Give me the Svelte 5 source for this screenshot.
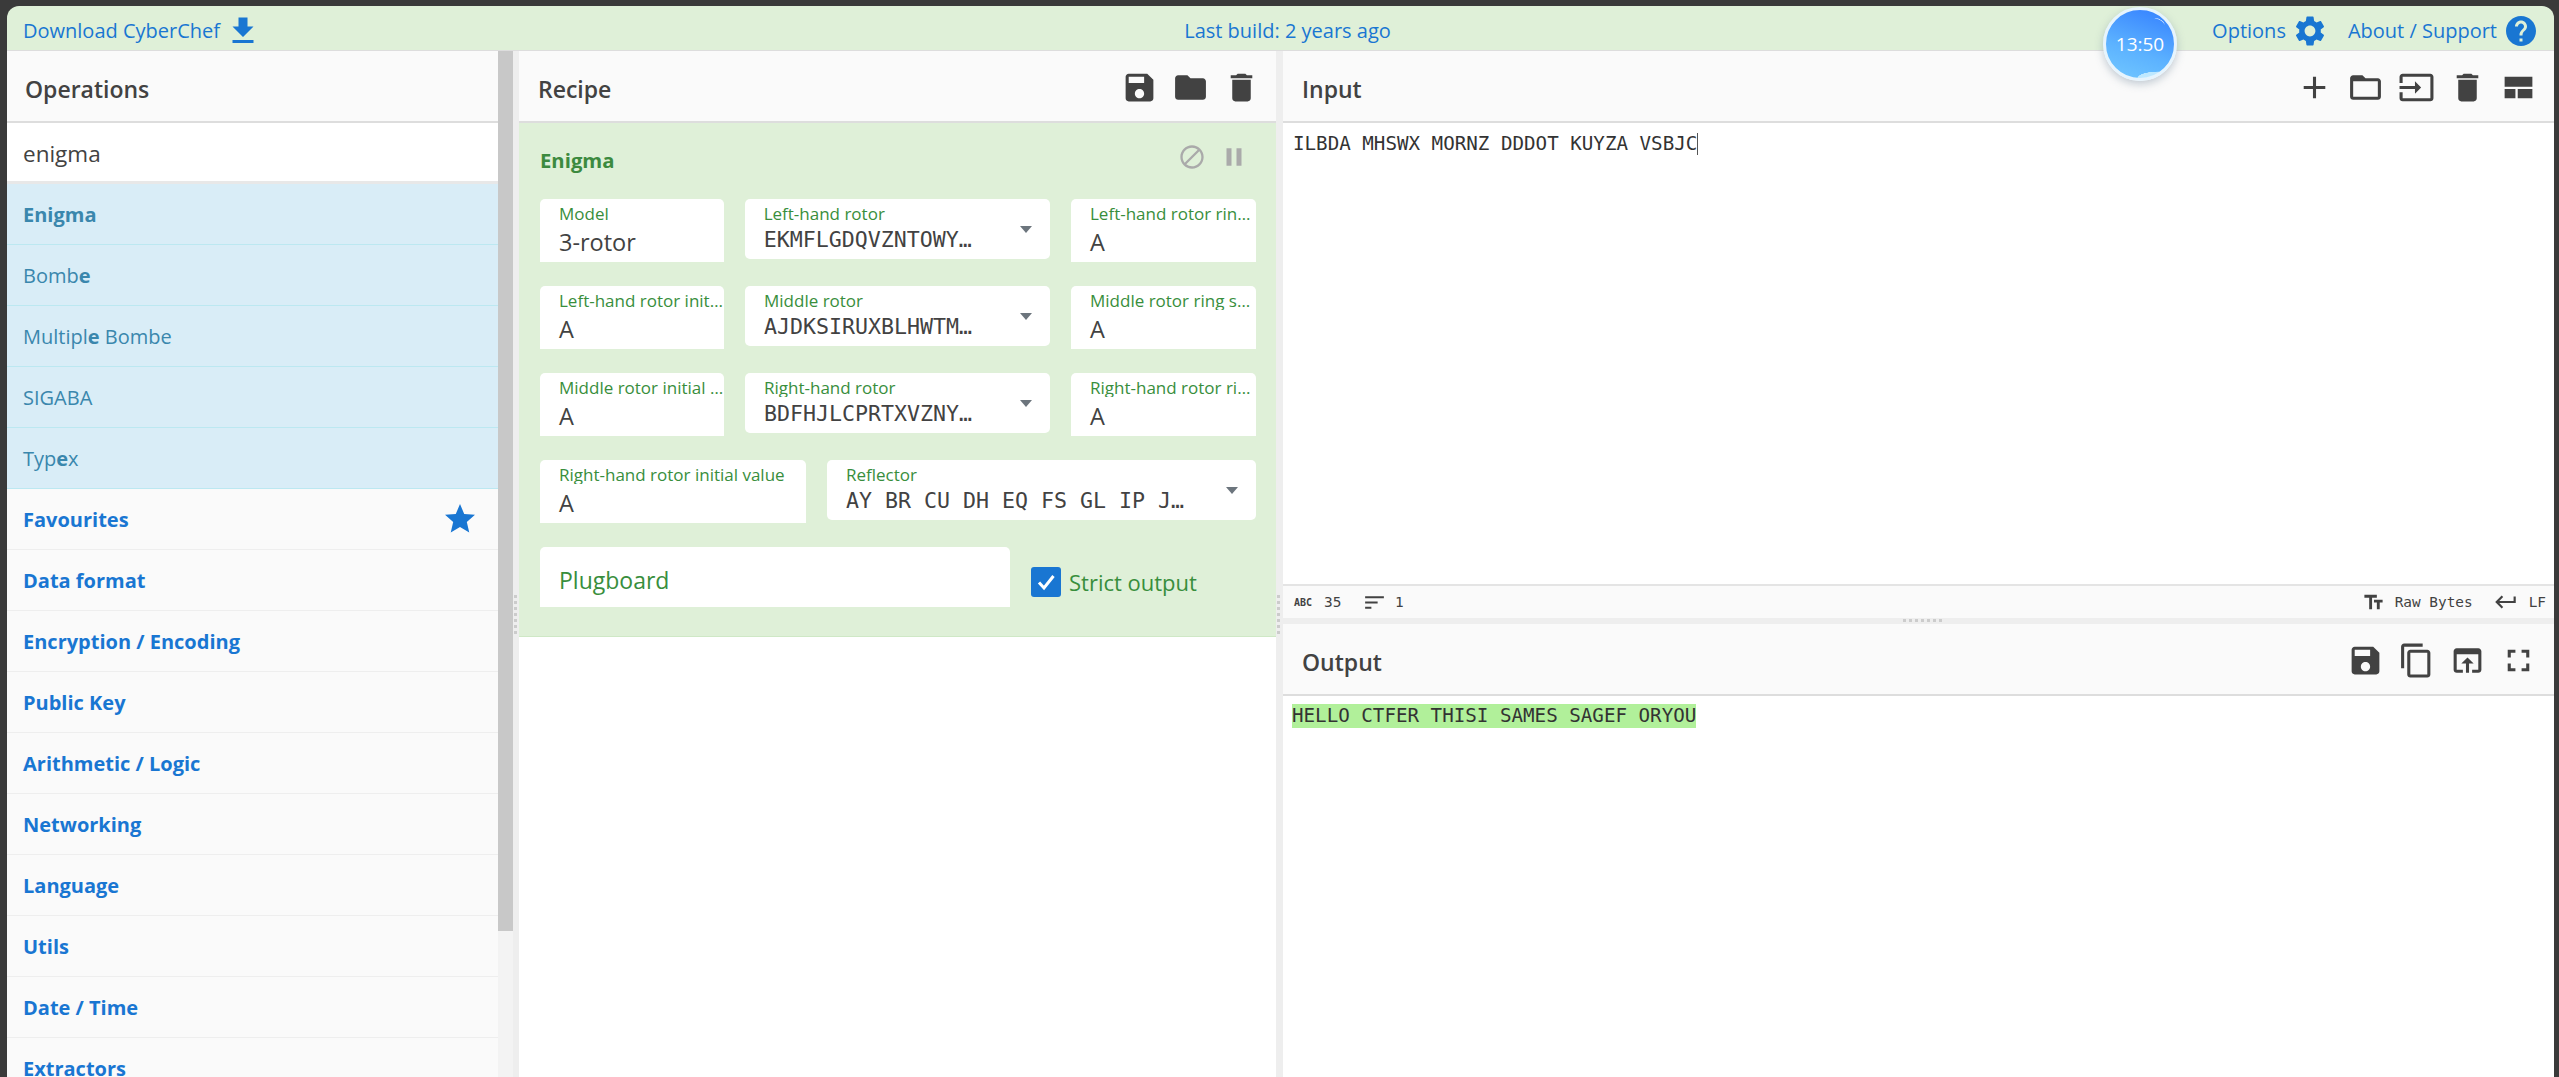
<script lang="ts">
    // CyberChef page: operations list, recipe, input and output panes
    const icons = {
        save: "M17 3H5c-1.11 0-2 .9-2 2v14c0 1.1.89 2 2 2h14c1.1 0 2-.9 2-2V7l-4-4zm-5 16c-1.66 0-3-1.34-3-3s1.34-3 3-3 3 1.34 3 3-1.34 3-3 3zm3-10H5V5h10v4z",
        folder: "M10 4H4c-1.1 0-1.99.9-1.99 2L2 18c0 1.1.9 2 2 2h16c1.1 0 2-.9 2-2V8c0-1.1-.9-2-2-2h-8l-2-2z",
        trash: "M6 19c0 1.1.9 2 2 2h8c1.1 0 2-.9 2-2V7H6v12zM19 4h-3.5l-1-1h-5l-1 1H5v2h14V4z",
        add: "M19 13h-6v6h-2v-6H5v-2h6V5h2v6h6v2z",
        folderOpen: "M20 6h-8l-2-2H4c-1.1 0-1.99.9-1.99 2L2 18c0 1.1.9 2 2 2h16c1.1 0 2-.9 2-2V8c0-1.1-.9-2-2-2zm0 12H4V8h16v10z",
        input: "M21 3.01H3c-1.1 0-2 .9-2 2V9h2V4.99h18v14.03H3V15H1v4.01c0 1.1.9 1.98 2 1.98h18c1.1 0 2-.88 2-1.98v-14c0-1.11-.9-2-2-2zM11 16l4-4-4-4v3H1v2h10v3z",
        layout: "M3 5h18v6.5H3zM3 13h7v6H3zM11.5 13H21v6h-9.5z",
        copy: "M16 1H4c-1.1 0-2 .9-2 2v14h2V3h12V1zm3 4H8c-1.1 0-2 .9-2 2v14c0 1.1.9 2 2 2h11c1.1 0 2-.9 2-2V7c0-1.1-.9-2-2-2zm0 16H8V7h11v14z",
        openIn: "M19 4H5c-1.11 0-2 .9-2 2v12c0 1.1.89 2 2 2h4v-2H5V8h14v10h-4v2h4c1.1 0 2-.9 2-2V6c0-1.1-.89-2-2-2zm-7 6l-4 4h3v6h2v-6h3l-4-4z",
        fullscreen: "M7 14H5v5h5v-2H7v-3zm-2-4h2V7h3V5H5v5zm12 7h-3v2h5v-5h-2v3zM14 5v2h3v3h2V5h-5z",
        gear: "M19.14 12.94c.04-.3.06-.61.06-.94 0-.32-.02-.64-.07-.94l2.03-1.58c.18-.14.23-.41.12-.61l-1.92-3.32c-.12-.22-.37-.29-.59-.22l-2.39.96c-.5-.38-1.03-.7-1.62-.94l-.36-2.54c-.04-.24-.24-.41-.48-.41h-3.84c-.24 0-.43.17-.47.41l-.36 2.54c-.59.24-1.13.57-1.62.94l-2.39-.96c-.22-.08-.47 0-.59.22L2.74 8.87c-.12.21-.08.47.12.61l2.03 1.58c-.05.3-.09.63-.09.94s.02.64.07.94l-2.03 1.58c-.18.14-.23.41-.12.61l1.92 3.32c.12.22.37.29.59.22l2.39-.96c.5.38 1.03.7 1.62.94l.36 2.54c.05.24.24.41.48.41h3.84c.24 0 .44-.17.47-.41l.36-2.54c.59-.24 1.13-.56 1.62-.94l2.39.96c.22.08.47 0 .59-.22l1.92-3.32c.12-.22.07-.47-.12-.61l-2.01-1.58zM12 15.6c-1.98 0-3.6-1.62-3.6-3.6s1.62-3.6 3.6-3.6 3.6 1.62 3.6 3.6-1.62 3.6-3.6 3.6z",
        help: "M12 2C6.48 2 2 6.48 2 12s4.48 10 10 10 10-4.48 10-10S17.52 2 12 2zm1 17h-2v-2h2v2zm2.07-7.75l-.9.92C13.45 12.9 13 13.5 13 15h-2v-.5c0-1.1.45-2.1 1.17-2.83l1.24-1.26c.37-.36.59-.86.59-1.41 0-1.1-.9-2-2-2s-2 .9-2 2H8c0-2.21 1.79-4 4-4s4 1.79 4 4c0 .88-.36 1.68-.93 2.25z",
        star: "M12 17.27L18.18 21l-1.64-7.03L22 9.24l-7.19-.61L12 2 9.19 8.63 2 9.24l5.46 4.73L5.82 21z",
        download: "M19 9h-4V3H9v6H5l7 7 7-7zM5 18v2h14v-2H5z",
        block: "M12 2C6.48 2 2 6.48 2 12s4.48 10 10 10 10-4.48 10-10S17.52 2 12 2zM4 12c0-4.42 3.58-8 8-8 1.85 0 3.55.63 4.9 1.69L5.69 16.9C4.63 15.55 4 13.85 4 12zm8 8c-1.85 0-3.55-.63-4.9-1.69L18.31 7.1C19.37 8.45 20 10.15 20 12c0 4.42-3.58 8-8 8z",
        pause: "M6 19h4V5H6v14zm8-14v14h4V5h-4z",
        textFields: "M2.5 4v3h5v12h3V7h5V4h-13zm19 5h-9v3h3v7h3v-7h3V9z",
        enter: "M19 7v4H5.83l3.58-3.59L8 6l-6 6 6 6 1.41-1.41L5.83 13H21V7z",
        sort: "M3 18h6v-2H3v2zM3 6v2h18V6H3zm0 7h12v-2H3v2z",
    };

    const categories = [
        "Favourites",
        "Data format",
        "Encryption / Encoding",
        "Public Key",
        "Arithmetic / Logic",
        "Networking",
        "Language",
        "Utils",
        "Date / Time",
        "Extractors",
    ];
</script>

{#snippet icon(d: string, size: number)}
    <svg class="icon" width={size} height={size} viewBox="0 0 24 24"><path {d} /></svg>
{/snippet}

{#snippet field(label: string, value: string, cls: string)}
    <div class="field {cls}">
        <div class="label">{label}</div>
        <div class="value">{value}</div>
    </div>
{/snippet}

{#snippet picker(label: string, value: string, cls: string)}
    <div class="picker {cls}">
        <div class="label">{label}</div>
        <div class="mono-value">{value}</div>
        <span class="caret"></span>
    </div>
{/snippet}

<div class="frame">
    <header class="banner">
        <div class="banner-left">
            <span>Download CyberChef</span>
            {@render icon(icons.download, 36)}
        </div>
        <div class="banner-mid">Last build: 2 years ago</div>
        <div class="banner-right">
            <span>Options</span>
            {@render icon(icons.gear, 36)}
            <span class="about">About / Support</span>
            {@render icon(icons.help, 36)}
        </div>
        <div class="clock">
            <span class="gloss"></span>
            13:50
        </div>
    </header>

    <main class="workspace">
        <section class="operations">
            <div class="ops-list">
                <div class="pane-title">Operations</div>
                <div class="search">enigma</div>
                <div class="op hit"><b>Enigma</b></div>
                <div class="op hit">Bomb<b>e</b></div>
                <div class="op hit">Multipl<b>e</b> Bombe</div>
                <div class="op hit">SIGABA</div>
                <div class="op hit">Typ<b>e</b>x</div>
                {#each categories as name, i}
                    <div class="op category">
                        {name}
                        {#if i === 0}
                            {@render icon(icons.star, 36)}
                        {/if}
                    </div>
                {/each}
            </div>
            <div class="scroll-track"><div class="scroll-thumb"></div></div>
        </section>

        <div class="gutter"><span class="grip"></span></div>

        <section class="recipe">
            <div class="pane-title">
                Recipe
                <div class="tools">
                    {@render icon(icons.save, 37)}
                    {@render icon(icons.folder, 37)}
                    {@render icon(icons.trash, 37)}
                </div>
            </div>
            <div class="enigma">
                <div class="enigma-head">
                    <span class="enigma-title">Enigma</span>
                    <div class="enigma-actions">
                        {@render icon(icons.block, 28)}
                        {@render icon(icons.pause, 30)}
                    </div>
                </div>
                <div class="ing-row">
                    {@render field("Model", "3-rotor", "w-a")}
                    {@render picker("Left-hand rotor", "EKMFLGDQVZNTOWYHXUSPAIBRCJ<R", "w-b")}
                    {@render field("Left-hand rotor ring setting", "A", "w-c")}
                </div>
                <div class="ing-row">
                    {@render field("Left-hand rotor initial value", "A", "w-a")}
                    {@render picker("Middle rotor", "AJDKSIRUXBLHWTMCQGZNPYFVOE<F", "w-b")}
                    {@render field("Middle rotor ring setting", "A", "w-c")}
                </div>
                <div class="ing-row">
                    {@render field("Middle rotor initial value", "A", "w-a")}
                    {@render picker("Right-hand rotor", "BDFHJLCPRTXVZNYEIWGAKMUSQO<W", "w-b")}
                    {@render field("Right-hand rotor ring setting", "A", "w-c")}
                </div>
                <div class="ing-row">
                    {@render field("Right-hand rotor initial value", "A", "w-d")}
                    {@render picker("Reflector", "AY BR CU DH EQ FS GL IP JX KN MO TZ VW", "w-e")}
                </div>
                <div class="ing-row last">
                    <div class="plugboard">Plugboard</div>
                    <div class="strict">
                        <span class="check">
                            <svg width="30" height="30" viewBox="0 0 30 30"><path d="M8 15.5l5 5.5 9.5-12" /></svg>
                        </span>
                        Strict output
                    </div>
                </div>
            </div>
        </section>

        <div class="gutter"><span class="grip"></span></div>

        <section class="io">
            <div class="input-pane">
                <div class="pane-title">
                    Input
                    <div class="tools">
                        {@render icon(icons.add, 37)}
                        {@render icon(icons.folderOpen, 37)}
                        {@render icon(icons.input, 37)}
                        {@render icon(icons.trash, 37)}
                        {@render icon(icons.layout, 37)}
                    </div>
                </div>
                <div class="editor">
                    <div class="line">ILBDA MHSWX MORNZ DDDOT KUYZA VSBJC<span class="cursor"></span></div>
                </div>
                <div class="status">
                    <span class="abc">ABC</span>
                    <span class="count">35</span>
                    <span class="sort">{@render icon(icons.sort, 25)}</span>
                    <span>1</span>
                    <span class="status-right">
                        {@render icon(icons.textFields, 23)}
                        <span>Raw Bytes</span>
                        <span class="enter">{@render icon(icons.enter, 26)}</span>
                        <span>LF</span>
                    </span>
                </div>
            </div>
            <div class="row-gutter"><span class="grip-h"></span></div>
            <div class="output-pane">
                <div class="pane-title">
                    Output
                    <div class="tools">
                        {@render icon(icons.save, 37)}
                        {@render icon(icons.copy, 37)}
                        {@render icon(icons.openIn, 37)}
                        {@render icon(icons.fullscreen, 37)}
                    </div>
                </div>
                <div class="editor out">
                    <div class="line"><mark>HELLO CTFER THISI SAMES SAGEF ORYOU</mark></div>
                </div>
            </div>
        </section>
    </main>
</div>

<style>
    :global(body) {
        margin: 0;
        background: #3a3a3a;
    }

    .frame {
        box-sizing: border-box;
        height: 1077px;
        padding: 6px 5px 0 7px;
        overflow: hidden;
        font-family: "Open Sans", sans-serif;
        color: #424242;
    }

    .icon {
        display: block;
        flex: none;
        fill: currentColor;
    }

    /* top banner */
    .banner {
        position: relative;
        display: grid;
        grid-template-columns: 1fr auto 1fr;
        align-items: center;
        box-sizing: border-box;
        height: 45px;
        padding-top: 4px;
        border-bottom: 1px solid #ddd;
        border-radius: 12px 12px 0 0;
        background: #dff0d8;
        color: #1976d2;
        font-size: 20px;
    }

    .banner .icon {
        margin-top: 2px;
    }

    .banner-left {
        display: flex;
        align-items: center;
        gap: 5px;
        padding-left: 16px;
    }

    .banner-mid {
        margin-left: 14px;
    }

    .banner-right {
        display: flex;
        align-items: center;
        justify-content: flex-end;
        gap: 6px;
        padding-right: 15px;
    }

    .about {
        margin-left: 14px;
    }

    .clock {
        position: absolute;
        left: 2096px;
        top: 1px;
        display: flex;
        align-items: center;
        justify-content: center;
        box-sizing: border-box;
        width: 74px;
        height: 74px;
        padding: 0;
        border: 3px solid #e6f4fd;
        border-radius: 50%;
        background:
            radial-gradient(ellipse 30px 9px at 78% 100%, rgba(205, 240, 255, 0.85) 70%, transparent 73%),
            linear-gradient(200deg, #3a87ff 10%, #5cb2ff 60%, #72c8ff 100%);
        box-shadow: 0 3px 8px rgba(120, 140, 160, 0.45);
        color: #fff;
        font-size: 19px;
        z-index: 3;
    }

    .gloss {
        position: absolute;
        right: 9px;
        top: 9px;
        width: 12px;
        height: 6px;
        border-top: 1.5px solid rgba(255, 255, 255, 0.75);
        border-radius: 50%;
        transform: rotate(30deg);
    }

    .workspace {
        display: grid;
        grid-template-columns: 506px 6px 757px 7px 1271px;
        height: 1026px;
        overflow: hidden;
    }

    .gutter {
        position: relative;
        background: #eee;
    }

    .grip {
        position: absolute;
        left: 1px;
        top: 544px;
        width: 3px;
        height: 40px;
        background: repeating-linear-gradient(#ccc 0 3px, transparent 3px 6px);
    }

    .pane-title {
        display: flex;
        align-items: center;
        justify-content: space-between;
        box-sizing: border-box;
        height: 72px;
        padding: 6px 18px 0 19px;
        border-bottom: 2px solid #ddd;
        background: #fafafa;
        font-size: 23px;
        font-weight: 600;
    }

    .ops-list .pane-title {
        padding-left: 18px;
    }

    /* operations column */
    .operations {
        display: flex;
        overflow: hidden;
    }

    .ops-list {
        flex: none;
        width: 491px;
    }

    .search {
        box-sizing: border-box;
        height: 61px;
        padding: 11px 16px 0;
        border-bottom: 3px solid #e8e8e8;
        background: #fff;
        font-size: 22.5px;
        line-height: 40px;
    }

    .op {
        display: flex;
        align-items: center;
        justify-content: space-between;
        box-sizing: border-box;
        height: 61px;
        padding: 0 20px 0 16px;
        font-size: 20px;
    }

    .op :global(b) {
        font-weight: 700;
    }

    .op.hit {
        display: block;
        padding-top: 17px;
        border-bottom: 1px solid #bce8f1;
        background: #d9edf7;
        color: #3a87ad;
    }

    .op.category {
        border-bottom: 1px solid #eee;
        background: #fafafa;
        color: #1976d2;
        font-weight: 700;
    }

    .scroll-track {
        flex: none;
        width: 15px;
        background: #f3f3f3;
    }

    .scroll-thumb {
        height: 880px;
        background: #c8c8c8;
    }

    /* recipe column */
    .recipe {
        background: #fff;
    }

    .tools {
        display: flex;
        gap: 14px;
        margin: -4px -2px 0 0;
        color: #424242;
    }

    .io .tools {
        margin-right: -1px;
    }

    .enigma {
        box-sizing: border-box;
        height: 514px;
        padding: 0 20px 0 21px;
        border-bottom: 1px solid #cfe8c6;
        background: #dff0d8;
    }

    .enigma-head {
        display: flex;
        align-items: center;
        justify-content: space-between;
        height: 76px;
        padding-right: 7px;
    }

    .enigma-title {
        margin-top: -2px;
        color: #3c8a3f;
        font-size: 20.3px;
        font-weight: 700;
    }

    .enigma-actions {
        display: flex;
        align-items: center;
        gap: 13px;
        margin-top: -9px;
        color: #aaa;
    }

    .ing-row {
        display: flex;
        gap: 21px;
        height: 63px;
        margin-bottom: 24px;
    }

    .field,
    .picker {
        position: relative;
        box-sizing: border-box;
        padding: 6px 0 0 19px;
        background: #fff;
    }

    .field {
        height: 63px;
        border-radius: 5px 5px 0 0;
    }

    .picker {
        height: 60px;
        border-radius: 5px;
    }

    .w-a {
        width: 184px;
    }

    .w-b {
        width: 306px;
    }

    .w-c {
        width: 185px;
    }

    .w-d {
        width: 266px;
    }

    .w-e {
        width: 429px;
    }

    .label {
        overflow: hidden;
        color: #388e3c;
        font-size: 17px;
        line-height: 18px;
        white-space: nowrap;
        text-overflow: ellipsis;
    }

    .value {
        margin-top: 5px;
        font-size: 23.5px;
        line-height: 28px;
    }

    .mono-value {
        overflow: hidden;
        width: 215px;
        margin-top: 3px;
        font-family: "DejaVu Sans Mono", monospace;
        font-size: 21.6px;
        line-height: 28px;
        white-space: nowrap;
        text-overflow: ellipsis;
    }

    .w-e .mono-value {
        width: 348px;
    }

    .caret {
        position: absolute;
        right: 18px;
        top: 27px;
        border-top: 7px solid #6c757d;
        border-left: 6px solid transparent;
        border-right: 6px solid transparent;
    }

    .last {
        height: 60px;
        margin: 0;
    }

    .plugboard {
        box-sizing: border-box;
        width: 470px;
        height: 60px;
        padding-left: 19px;
        border-radius: 5px 5px 0 0;
        background: #fff;
        color: #388e3c;
        font-size: 23px;
        line-height: 66px;
    }

    .strict {
        display: flex;
        align-items: center;
        gap: 8px;
        margin-top: 20px;
        height: 30px;
        color: #388e3c;
        font-size: 22px;
    }

    .check {
        display: block;
        width: 30px;
        height: 30px;
        border-radius: 3px;
        background: #1976d2;
    }

    .check path {
        fill: none;
        stroke: #fff;
        stroke-width: 3;
    }

    /* input and output */
    .io {
        display: flex;
        flex-direction: column;
        background: #fff;
    }

    .input-pane .editor {
        box-sizing: border-box;
        height: 463px;
        padding: 9px 0 0 10px;
        border-bottom: 2px solid #e4e4e4;
    }

    .editor.out {
        padding: 8px 0 0 9px;
    }

    .line {
        color: #333;
        font-family: "DejaVu Sans Mono", monospace;
        font-size: 19.2px;
        line-height: 24px;
        white-space: pre;
    }

    .cursor {
        display: inline-block;
        width: 1px;
        height: 22px;
        background: #555;
        vertical-align: -5px;
    }

    mark {
        display: inline-block;
        background: #b1f09a;
        color: #333;
    }

    .status {
        display: flex;
        align-items: center;
        box-sizing: border-box;
        height: 32px;
        padding: 0 8px 0 11px;
        background: #fafafa;
        font-family: "DejaVu Sans Mono", monospace;
        font-size: 14.4px;
    }

    .abc {
        width: 30px;
        font-size: 10px;
        font-weight: 700;
    }

    .count {
        width: 38px;
    }

    .sort {
        margin-right: 8px;
    }

    .status-right {
        display: flex;
        align-items: center;
        gap: 10px;
        margin-left: auto;
    }

    .enter {
        margin-left: 10px;
    }

    .row-gutter {
        position: relative;
        height: 6px;
        background: #eee;
    }

    .grip-h {
        position: absolute;
        left: 620px;
        top: 1px;
        width: 42px;
        height: 3px;
        background: repeating-linear-gradient(90deg, #ccc 0 3px, transparent 3px 6px);
    }
</style>
